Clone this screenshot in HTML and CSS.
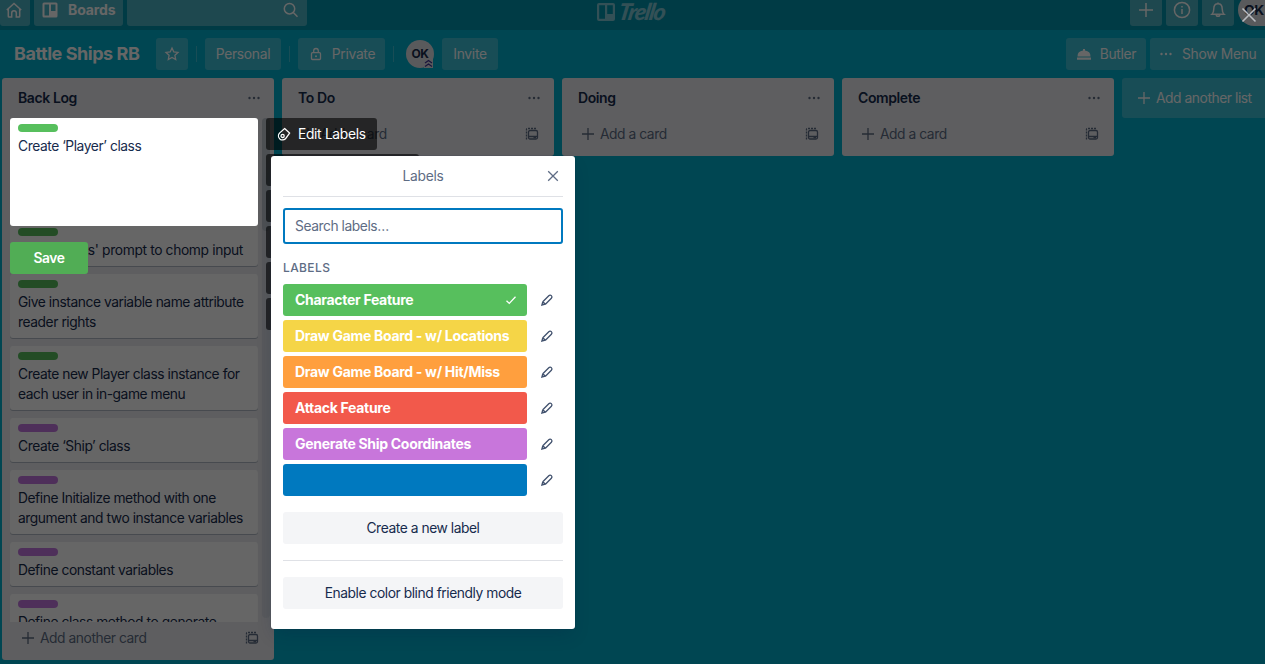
FILE: index.html
```html
<!DOCTYPE html>
<html lang="en">
<head>
<meta charset="utf-8">
<title>Battle Ships RB | Trello</title>
<link rel="stylesheet" href="styles.css">
</head>
<body>
<svg class="defs" width="0" height="0">
  <symbol id="plus" viewBox="0 0 16 16"><path d="M8 2v12M2 8h12"/></symbol>
  <symbol id="dots" viewBox="0 0 16 16"><g class="solid"><circle cx="3.5" cy="8" r="1.2"/><circle cx="8" cy="8" r="1.2"/><circle cx="12.5" cy="8" r="1.2"/></g></symbol>
  <symbol id="template" viewBox="0 0 16 16"><path stroke-dasharray="2 1" d="M12 2.500H3.200Q2.500 2.500 2.500 3.200V13.500"/><rect x="4.500" y="4.500" width="9" height="8.500" rx="1.500"/><path d="M5 10.500h8M9.500 11.700h2.500"/></symbol>
  <symbol id="pencil" viewBox="0 0 16 16"><path d="M3.800 9.800 9.800 3.700a1.800 1.800 0 0 1 2.600 2.500L6.400 12.200M3.800 9.800l2.600 2.400M3.800 9.800l-.9 3.200 3.500-.8"/></symbol>
  <symbol id="close" viewBox="0 0 16 16"><path d="m3.200 3.200 9.600 9.600m0-9.600-9.600 9.600"/></symbol>
</svg>

<div class="page">
  <header class="top">
    <div class="group">
      <span class="nav home"><svg class="i20" viewBox="0 0 20 20"><path d="m2.800 10 7.200-6.600 7.200 6.600M4.300 9v7.200q0 .8.800.8h2.600v-4a2.300 2.300 0 0 1 4.600 0v4h2.600q.8 0 .8-.8V9"/></svg></span>
      <span class="nav boards"><svg class="i20" viewBox="0 0 20 20"><path class="solid" d="M4 2.500h12q1.500 0 1.500 1.500v12q0 1.500-1.500 1.500H4q-1.500 0-1.500-1.500V4q0-1.500 1.500-1.500zM4.500 4.500v11H9v-11zM11 4.500V11h4.500V4.500z" fill-rule="evenodd"/></svg><b>Boards</b></span>
      <span class="nav search"><svg class="i20" viewBox="0 0 20 20"><circle cx="8.500" cy="8.700" r="5.200"/><path d="m12.300 12.500 4.200 4.200"/></svg></span>
    </div>
    <div class="logo"><svg width="18" height="18" viewBox="0 0 18 18"><path fill-rule="evenodd" d="M2 0h14q2 0 2 2v14q0 2-2 2H2q-2 0-2-2V2q0-2 2-2zM2.200 2.200v13.500H8V2.200zM10.200 2.200V11h5.600V2.200z"/></svg><i>Trello</i></div>
    <div class="group right">
      <span class="nav sq"><svg class="i20" viewBox="0 0 20 20"><path d="M10 3v14M3 10h14"/></svg></span>
      <span class="nav sq"><svg class="i20" viewBox="0 0 20 20"><circle cx="10" cy="10" r="7.600"/><path d="M10 9v5M10 6v1.400"/></svg></span>
      <span class="nav sq"><svg class="i20" viewBox="0 0 20 20"><path d="M4 14.200c1.600-1.400 1.800-3 1.800-5.400 0-3 1.700-5 4.200-5s4.200 2 4.200 5c0 2.400.2 4 1.800 5.400zM8.200 14.500a1.800 1.800 0 0 0 3.600 0M10 2.500v1.300"/></svg></span>
      <span class="me">OK</span>
    </div>
  </header>

  <div class="boardbar">
    <h1>Battle Ships RB</h1>
    <span class="btn star"><svg class="i16" viewBox="0 0 16 16"><path d="m8 2 1.800 3.900 4.200.5-3.100 2.900.8 4.200L8 11.400l-3.700 2.100.8-4.200L2 6.400l4.200-.5z"/></svg></span>
    <span class="sep"></span>
    <span class="btn personal">Personal</span>
    <span class="sep"></span>
    <span class="btn private"><svg class="i16" viewBox="0 0 16 16"><rect x="3.500" y="6.700" width="9" height="6.800" rx="1"/><path d="M5.700 6.700V4.800a2.300 2.300 0 0 1 4.600 0v1.900"/><circle class="solid" cx="8" cy="10.200" r="1"/></svg>Private</span>
    <span class="sep"></span>
    <span class="member">OK<svg viewBox="0 0 9 9"><path d="m1 4 3.500-2.500L8 4M1 7.500 4.500 5 8 7.500"/></svg></span>
    <span class="btn invite">Invite</span>
    <span class="btn butler"><svg class="i16" viewBox="0 0 16 16"><path class="solid" d="M1.500 10.500a6.500 6 0 0 1 5.500-5.900V3h2v1.600a6.500 6 0 0 1 5.500 5.900zM1 11.500h14v2.300H1z"/></svg>Butler</span>
    <span class="btn menu"><svg class="i16"><use href="#dots"/></svg>Show Menu</span>
  </div>

  <main class="lists">
    <section class="list backlog">
      <h2>Back Log<svg class="i16"><use href="#dots"/></svg></h2>
      <div class="scroll">
        <div class="cards">
          <article><em></em><p class="end">ts' prompt to chomp input</p></article>
          <article><em></em><p>Give instance variable name attribute<br>reader rights</p></article>
          <article><em></em><p>Create new Player class instance for<br>each user in in-game menu</p></article>
          <article><em class="purple"></em><p>Create ‘Ship’ class</p></article>
          <article><em class="purple"></em><p>Define Initialize method with one<br>argument and two instance variables</p></article>
          <article><em class="purple"></em><p>Define constant variables</p></article>
          <article><em class="purple"></em><p>Define class method to generate</p></article>
        </div>
        <div class="track"><div class="thumb"></div></div>
      </div>
      <div class="add"><svg class="i16"><use href="#plus"/></svg><span>Add another card</span><svg class="i16 tpl"><use href="#template"/></svg></div>
    </section>
    <section class="list"><h2>To Do<svg class="i16"><use href="#dots"/></svg></h2><div class="add"><svg class="i16"><use href="#plus"/></svg><span>Add a card</span><svg class="i16 tpl"><use href="#template"/></svg></div></section>
    <section class="list"><h2>Doing<svg class="i16"><use href="#dots"/></svg></h2><div class="add"><svg class="i16"><use href="#plus"/></svg><span>Add a card</span><svg class="i16 tpl"><use href="#template"/></svg></div></section>
    <section class="list"><h2>Complete<svg class="i16"><use href="#dots"/></svg></h2><div class="add"><svg class="i16"><use href="#plus"/></svg><span>Add a card</span><svg class="i16 tpl"><use href="#template"/></svg></div></section>
    <div class="newlist"><svg class="i16"><use href="#plus"/></svg>Add another list</div>
  </main>
</div>

<div class="overlay">
  <svg class="dismiss" viewBox="0 0 16 16"><path d="m1.500 1.500 13 13m0-13-13 13"/></svg>
  <div class="editor"><em></em><p>Create ‘Player’ class</p></div>
  <div class="save">Save</div>
  <div class="actions">
    <span class="first"><svg class="i16" viewBox="0 0 16 16"><path d="M8.600 2.500 13.600 7 10 12.200a4.200 4.200 0 0 1-6.200.7 4.200 4.200 0 0 1-.3-5.800z"/><circle cx="6.600" cy="9.900" r="1.600"/></svg>Edit Labels</span>
    <span class="second"></span><span></span><span></span><span></span><span></span>
  </div>
  <div class="popover">
    <div class="pophead"><span>Labels</span><svg class="i16"><use href="#close"/></svg></div>
    <div class="field">Search labels…</div>
    <h4>LABELS</h4>
    <div class="row"><b class="green">Character Feature<svg class="i16" viewBox="0 0 16 16"><path d="m3.500 8.700 2.800 2.700 6.200-6.600"/></svg></b><svg class="i16"><use href="#pencil"/></svg></div>
    <div class="row"><b class="yellow">Draw Game Board - w/ Locations</b><svg class="i16"><use href="#pencil"/></svg></div>
    <div class="row"><b class="orange">Draw Game Board - w/ Hit/Miss</b><svg class="i16"><use href="#pencil"/></svg></div>
    <div class="row"><b class="red">Attack Feature</b><svg class="i16"><use href="#pencil"/></svg></div>
    <div class="row"><b class="violet">Generate Ship Coordinates</b><svg class="i16"><use href="#pencil"/></svg></div>
    <div class="row"><b class="blue"></b><svg class="i16"><use href="#pencil"/></svg></div>
    <div class="wide create">Create a new label</div>
    <hr>
    <div class="wide">Enable color blind friendly mode</div>
  </div>
</div>
</body>
</html>
```
FILE: styles.css
```css
* { box-sizing: border-box; }
body { margin: 0; width: 1265px; height: 664px; overflow: hidden; position: relative; font: 13.8px/20px Inter, "Liberation Sans", sans-serif; letter-spacing: -0.440px; color: #172b4d; }
p, h1, h2, h4 { margin: 0; }
svg { fill: none; stroke: currentColor; stroke-width: 1.300; flex: none; }
.solid { fill: currentColor; stroke: none; }
.defs { position: absolute; }
.i16 { width: 16px; height: 16px; }
.i20 { width: 20px; height: 20px; stroke-width: 1.500; }

.page { height: 664px; background: #00aecc; overflow: hidden; }
.top { height: 30px; background: #0094ad; display: flex; justify-content: space-between; align-items: flex-end; padding-bottom: 4px; color: #fff; overflow: hidden; }
.group { display: flex; gap: 4px; width: 560px; }
.right { justify-content: flex-end; }
.nav { height: 32px; background: rgba(255,255,255,.3); border-radius: 3px; display: flex; align-items: center; }
.home { width: 30px; padding-left: 4px; }
.boards { width: 89px; padding-left: 6px; gap: 8px; font-size: 14px; letter-spacing: -0.100px; }
.search { width: 180px; justify-content: flex-end; padding-right: 6px; }
.sq { width: 32px; justify-content: center; }
.me { width: 27px; height: 32px; border-radius: 16px 0 0 16px; background: #dfe1e6; color: #172b4d; font-weight: 700; line-height: 32px; padding-left: 6px; }
.logo { display: flex; align-items: center; gap: 4px; height: 24px; opacity: .5; width: 74px; margin-bottom: 1px; padding-left: 1px; }
.logo svg { fill: #fff; stroke: none; margin-top: -3px; }
.logo i { font: italic 900 23px/24px Lato, sans-serif; letter-spacing: -1.300px; transform: skewX(-10deg); margin-top: -4px; }

.boardbar { height: 48px; padding: 8px 0 8px 14px; display: flex; align-items: center; color: #fff; }
h1 { width: 142px; font-size: 18px; line-height: 24px; letter-spacing: -0.450px; white-space: nowrap; }
.btn { height: 32px; background: rgba(255,255,255,.24); border-radius: 3px; display: flex; align-items: center; justify-content: center; white-space: nowrap; letter-spacing: -0.280px; }
.star { width: 32px; }
.sep { width: 1px; height: 16px; background: rgba(255,255,255,.24); margin: 0 8px; }
.personal { width: 76px; }
.private { width: 87px; gap: 8px; }
.member { position: relative; width: 28px; height: 28px; border-radius: 14px; background: #dfe1e6; color: #172b4d; font: 700 12px/28px Inter, sans-serif; text-align: center; margin: 0 8px 0 4px; }
.member svg { position: absolute; right: 1px; bottom: 0; width: 9px; height: 9px; color: #403294; background: #dfe1e6; }
.invite { width: 56px; }
.butler { width: 80px; gap: 8px; margin-left: auto; margin-right: 4px; }
.menu { width: 115px; gap: 8px; border-radius: 3px 0 0 3px; justify-content: flex-start; padding-left: 8px; }

.lists { display: flex; gap: 8px; padding-left: 2px; align-items: flex-start; }
.list { width: 272px; height: 78px; background: #ebecf0; border-radius: 3px; flex: none; }
.backlog { height: 582px; }
h2 { height: 40px; font-size: 14px; font-weight: 600; padding: 0 12px 0 16px; display: flex; align-items: center; justify-content: space-between; letter-spacing: -0.400px; }
h2 svg, .add { color: #5e6c84; }
.scroll { height: 504px; display: flex; overflow: hidden; padding: 0 4px 0 8px; gap: 4px; }
.cards { width: 248px; padding-top: 104px; display: flex; flex-direction: column; gap: 8px; }
article { background: #fff; border-radius: 3px; box-shadow: 0 1px 0 rgba(9,30,66,.25); padding: 6px 8px; white-space: nowrap; flex: none; }
em { display: block; width: 40px; height: 8px; border-radius: 4px; background: #57bf5d; margin-bottom: 4px; }
.purple { background: #c377e0; }
.end { text-align: right; padding-right: 7px; letter-spacing: -0.360px; }
.track { width: 8px; height: 500px; border-radius: 4px; background: #dcdfe5; }
.thumb { height: 113px; border-radius: 4px; background: #c1c7d0; }
.add { height: 32px; display: flex; align-items: center; gap: 4px; padding: 0 14px 0 18px; }
.tpl { margin-left: auto; color: #5e6c84; }
.newlist { width: 143px; height: 40px; background: rgba(255,255,255,.24); border-radius: 3px 0 0 3px; color: #fff; display: flex; align-items: center; gap: 4px; padding-left: 14px; white-space: nowrap; }

.overlay { position: absolute; inset: 0; background: rgba(0,0,0,.6); }
.dismiss { position: absolute; left: 1241px; top: 7px; width: 16px; height: 16px; color: #b9bcc0; stroke-width: 1.600; }
.editor { position: absolute; left: 10px; top: 118px; width: 248px; height: 108px; background: #fff; border-radius: 3px; padding: 6px 8px; }
.save { position: absolute; left: 10px; top: 242px; width: 78px; height: 32px; border-radius: 3px; background: #51ad55; color: #fff; font-weight: 600; line-height: 32px; text-align: center; }
.actions { position: absolute; left: 266px; top: 118px; display: flex; flex-direction: column; gap: 4px; }
.actions span { width: 100px; height: 32px; border-radius: 3px; background: rgba(0,0,0,.6); }
.actions .first { width: 111px; display: flex; align-items: center; gap: 6px; padding-left: 10px; color: #fff; letter-spacing: -0.320px; }
.actions .second { width: 153px; }

.popover { position: absolute; left: 271px; top: 156px; width: 304px; height: 473px; background: #fff; border-radius: 3px; padding: 0 12px; box-shadow: 0 8px 16px -4px rgba(9,30,66,.25), 0 0 0 1px rgba(9,30,66,.08); }
.pophead { height: 41px; border-bottom: 1px solid #dfe1e6; display: flex; align-items: center; color: #5e6c84; padding-right: 2px; margin-bottom: 11px; }
.pophead span { flex: 1; text-align: center; padding-left: 18px; letter-spacing: -0.280px; }
.field { height: 36px; border: 2px solid #0079bf; border-radius: 3px; padding: 6px 10px; color: #5e6c84; }
h4 { font-size: 12px; line-height: 16px; font-weight: 500; color: #5e6c84; letter-spacing: .4px; margin: 16px 0 8px; }
.row { height: 32px; display: flex; align-items: center; gap: 12px; margin-bottom: 4px; color: #42526e; }
.row b { width: 244px; height: 32px; border-radius: 3px; color: #fff; padding: 0 8px 0 12px; display: flex; align-items: center; justify-content: space-between; font-size: 14px; font-weight: 700; letter-spacing: -0.300px; white-space: nowrap; }
.green { background: #57bf5d; }
.yellow { background: #f5d547; }
.orange { background: #ff9f3e; }
.red { background: #f2594b; }
.violet { background: #c876db; }
.blue { background: #0079bf; }
.wide { height: 32px; background: #f4f5f7; border-radius: 3px; text-align: center; line-height: 32px; }
.create { margin-top: 16px; }
hr { border: 0; height: 1px; background: #dfe1e6; margin: 16px 0; }
```
